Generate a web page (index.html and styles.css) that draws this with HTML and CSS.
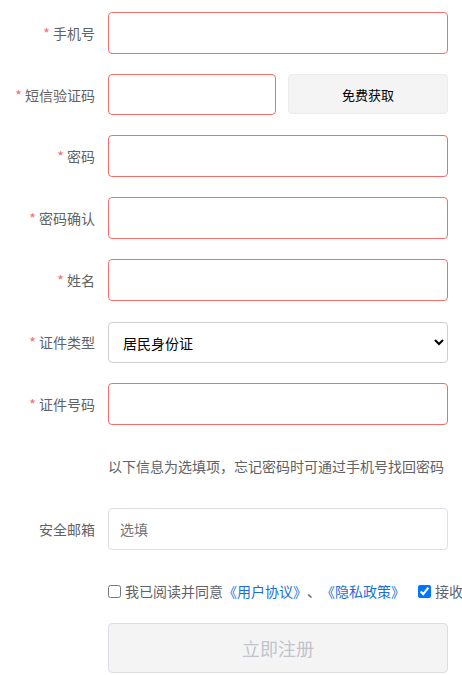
FILE: index.html
```html
<!DOCTYPE html>
<html lang="zh-CN">
<head>
    <meta charset="UTF-8">
    <meta name="viewport" content="width=device-width, initial-scale=1.0">
    <title>注册</title>
    <link rel="stylesheet" href="styles.css">
</head>
<body>
    <form class="register-form">
        <div class="form-row">
            <label class="form-label"><span class="required">*</span> 手机号</label>
            <input type="text" class="form-input is-error">
        </div>

        <div class="form-row">
            <label class="form-label"><span class="required">*</span> 短信验证码</label>
            <div class="code-group">
                <input type="text" class="form-input is-error code-input">
                <button type="button" class="code-button">免费获取</button>
            </div>
        </div>

        <div class="form-row">
            <label class="form-label"><span class="required">*</span> 密码</label>
            <input type="password" class="form-input is-error">
        </div>

        <div class="form-row">
            <label class="form-label"><span class="required">*</span> 密码确认</label>
            <input type="password" class="form-input is-error">
        </div>

        <div class="form-row">
            <label class="form-label"><span class="required">*</span> 姓名</label>
            <input type="text" class="form-input is-error">
        </div>

        <div class="form-row">
            <label class="form-label"><span class="required">*</span> 证件类型</label>
            <select class="form-select">
                <option>居民身份证</option>
                <option>护照</option>
            </select>
        </div>

        <div class="form-row">
            <label class="form-label"><span class="required">*</span> 证件号码</label>
            <input type="text" class="form-input is-error">
        </div>

        <div class="form-row hint-row">
            <p class="hint">以下信息为选填项，忘记密码时可通过手机号找回密码</p>
        </div>

        <div class="form-row">
            <label class="form-label">安全邮箱</label>
            <input type="text" class="form-input" placeholder="选填">
        </div>

        <div class="form-row agree-row">
            <label class="check"><input type="checkbox"> 我已阅读并同意<a href="#">《用户协议》</a>、<a href="#">《隐私政策》</a></label>
            <label class="check receive"><input type="checkbox" checked> 接收</label>
        </div>

        <div class="form-row">
            <button type="submit" class="submit-button" disabled>立即注册</button>
        </div>
    </form>
</body>
</html>
```

FILE: styles.css
```css
html, body {
    margin: 0;
    padding: 0;
    overflow: hidden;
    background-color: #fff;
    font-family: "Noto Sans CJK SC", "Noto Sans", sans-serif;
    font-size: 14px;
    color: #606266;
}

.register-form {
    padding-top: 12px;
    width: 448px;
}

.form-row {
    display: flex;
    align-items: center;
    margin-bottom: 20px;
    padding-left: 108px;
    position: relative;
}

.form-label {
    position: absolute;
    left: 0;
    width: 95px;
    text-align: right;
    line-height: 42px;
    white-space: nowrap;
}

.required {
    color: #f56c6c;
}

.form-input {
    box-sizing: border-box;
    width: 340px;
    height: 42px;
    border: 1px solid #dcdfe6;
    border-radius: 4px;
    padding: 0 11px;
    font-family: inherit;
    font-size: 14px;
    color: #303133;
    outline: none;
}

.form-input::placeholder {
    color: #757575;
}

.form-input.is-error {
    border-color: #f56c6c;
}

.code-group {
    display: flex;
    gap: 12px;
}

.code-input {
    width: 168px;
    height: 41px;
}

.code-button {
    width: 160px;
    height: 40px;
    background-color: #f4f4f5;
    border: 1px solid #ebebed;
    border-radius: 4px;
    font-family: inherit;
    font-size: 13px;
    color: #000;
    cursor: pointer;
}

.form-select {
    box-sizing: border-box;
    width: 341px;
    height: 41px;
    margin-top: 1px;
    border: 1px solid #cfcfd2;
    border-radius: 4px;
    padding: 0 10px;
    background-color: #fff;
    font-family: inherit;
    font-size: 14px;
    color: #000;
}

.hint-row {
    margin-top: 30px;
    margin-bottom: 31px;
}

.hint {
    margin: 0;
    line-height: 22px;
    white-space: nowrap;
}

.agree-row {
    margin-top: 27px;
    margin-bottom: 18px;
    white-space: nowrap;
    height: 28px;
}

.check {
    display: flex;
    align-items: center;
}

.check input {
    margin: 0 4px 0 0;
    width: 13px;
    height: 13px;
}

.check a {
    color: #1a6fd6;
    text-decoration: none;
}

.receive {
    margin-left: 13px;
}

.submit-button {
    width: 340px;
    height: 50px;
    background-color: #f4f4f5;
    border: 1px solid #dcdfe6;
    border-radius: 4px;
    font-family: inherit;
    font-size: 18px;
    color: #c0c4cc;
}
```
